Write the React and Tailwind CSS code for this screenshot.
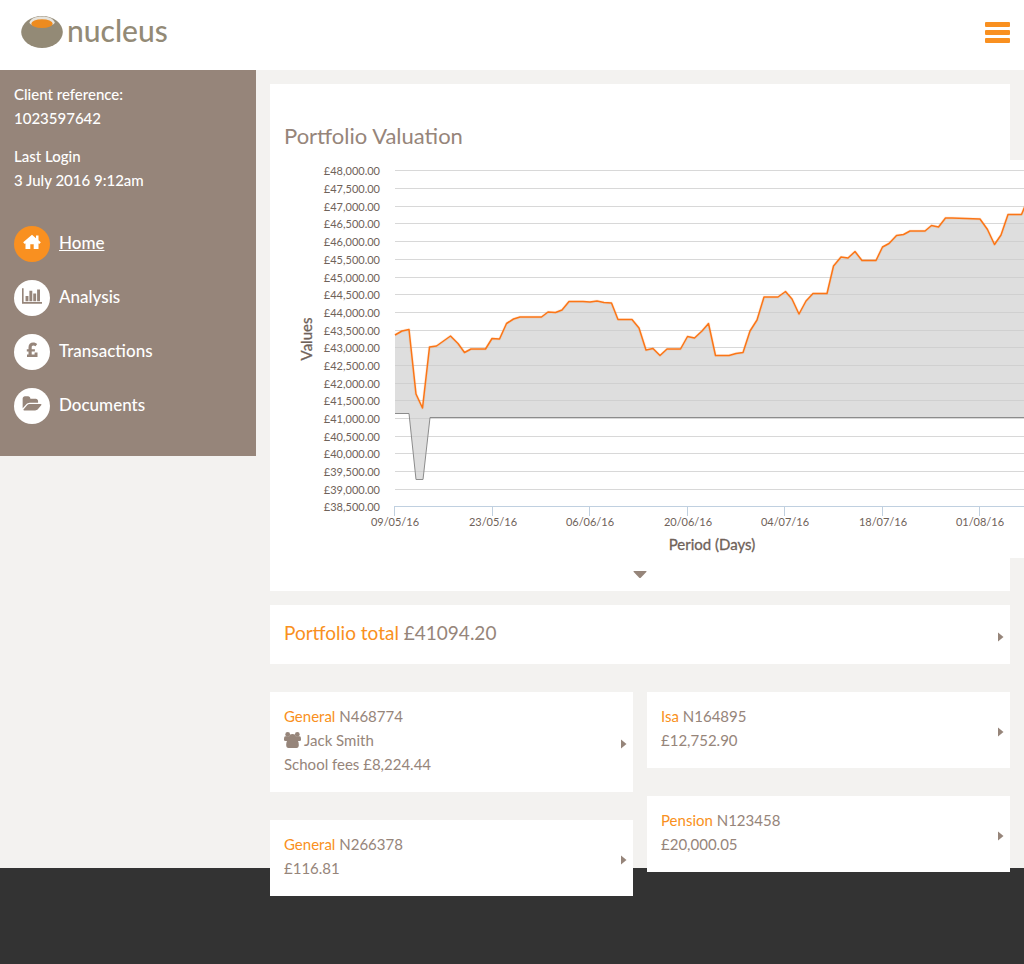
import { useId } from "react";

const VALUES = [
  [395, 335], [402, 331], [409, 329.5], [416, 394], [422.5, 408], [429.500, 347], [436.5, 346], [450.5, 336], [458, 343.500], [464.5, 352.5], [471, 349], [485.5, 349], [492, 338.5], [499.5, 339], [506.5, 323.5], [513.5, 319], [520, 317], [541.5, 317], [548, 312], [555.500, 312.5], [562, 310], [569, 301.5], [583, 301.5], [590, 302], [597, 301], [604, 302.5], [611.5, 303], [618, 319.5], [632, 319.5], [639, 328], [646, 350], [653, 348.5], [660, 355.5], [667, 349], [680.5, 349], [687.5, 336.5], [694.5, 338], [702, 331], [708.5, 323.5], [715.5, 355.5], [729, 355.5], [736, 353.5], [743, 352.5], [750, 331], [757, 320], [764, 297], [778, 297], [785.5, 291.5], [792, 299], [799, 314], [806, 301], [813, 293.5], [827, 293.5], [833.5, 266], [841, 257], [848, 258], [855, 251.5], [862, 260.5], [876, 260.5], [882.5, 247], [889, 243.5], [896.500, 235.5], [903.500, 234.5], [910, 231], [925, 231], [931.5, 225.5], [938.5, 227], [945.5, 218], [952, 218], [980, 219], [987.5, 229.5], [994.500, 244.500], [1001, 235], [1008, 214.500], [1021.500, 214.500], [1025, 206],
];
const BASE = [[395, 413.5], [409, 413.5], [416, 479.5], [423, 479.5], [430, 417.5], [1025, 417.5]];

const pts = (list) => list.map(([x, y]) => x + "," + y).join(" ");

const Y_TICKS = Array.from({ length: 20 }, (_, i) => ({
  label: "£" + (48000 - i * 500).toLocaleString("en-GB") + ".00",
  y: Math.round(170.4 + (i * 336) / 19),
}));
const X_TICKS = [
  ["09/05/16", 395], ["23/05/16", 493], ["06/06/16", 590], ["20/06/16", 688],
  ["04/07/16", 785], ["18/07/16", 883], ["01/08/16", 980],
];

function Chart() {
  const id = useId();
  return (
    <svg width="740" height="398" viewBox="284 160 740 398" role="img" aria-labelledby={id} className="block">
      <title id={id}>Portfolio Valuation</title>
      <rect x="284" y="160" width="740" height="398" fill="#fff" />
      {Y_TICKS.map((t) => (
        <g key={t.label}>
          <line x1="395" x2="1024" y1={t.y + 0.5} y2={t.y + 0.5} stroke="#d8d8d8" />
          <text x="380" y={t.y + 5} textAnchor="end" fontSize="11" fill="#6f6259">{t.label}</text>
        </g>
      ))}
      <polygon points={pts([...VALUES, ...[...BASE].reverse()])} fill="#cacaca" fillOpacity="0.63" />
      <polyline points={pts(BASE)} fill="none" stroke="#8c8c8c" />
      <polyline points={pts(VALUES)} fill="none" stroke="#ff7a1a" strokeOpacity="0.12" strokeWidth="3" strokeLinejoin="round" />
      <polyline points={pts(VALUES)} fill="none" stroke="#fb7516" strokeWidth="1.5" strokeLinejoin="round" />
      <line x1="394" x2="1024" y1="506.5" y2="506.5" stroke="#c0d0e0" />
      {X_TICKS.map(([label, x]) => (
        <g key={label}>
          <line x1={x - 0.5} x2={x - 0.5} y1="507" y2="516" stroke="#c0d0e0" />
          <text x={x} y="526" textAnchor="middle" fontSize="11" fill="#6f6259">{label}</text>
        </g>
      ))}
      <text x="712" y="550" textAnchor="middle" fontSize="15" fill="#6f6259" stroke="#6f6259" strokeWidth="0.3">Period (Days)</text>
      <text transform="translate(312 339) rotate(-90)" textAnchor="middle" fontSize="15" fill="#6f6259" stroke="#6f6259" strokeWidth="0.3">Values</text>
    </svg>
  );
}

const ICONS = {
  home: {
    viewBox: "0 0 18 18",
    d: "M9 1.800 13 5.200V2.500H15.500V7.300L17.800 9.300 16.700 10.700 15.500 10.400V16H10.700V11.300H7.300V16H2.500V10.400L1.300 10.700.2 9.300z",
  },
  bars: {
    viewBox: "0 0 2048 1792",
    d: "M640 896v512H352V896h288zm384-512v1024H736V384h288zm1024 1120v176H0V128h160v1376h1888zm-640-864v768h-288V640h288zm384-384v1152h-288V256h288z",
  },
  pound: {
    viewBox: "0 0 12 18",
    d: "M1 16V13.600H2.500V10.600H.8V8.200H2.500V6.200C2.500 3.400 4.400 1.600 7.100 1.600 8.900 1.600 10.300 2.300 11.200 3.100L9.500 5.300C8.800 4.700 8.100 4.400 7.300 4.400 6.200 4.400 5.700 5.100 5.700 6.300V8.200H8.900V10.600H5.700V13.400H8.600V11.500H11.500V16z",
  },
  folder: {
    viewBox: "0 0 1943 1792",
    d: "M1943 952q0 31-31 66l-336 396q-43 51-120.500 86.500t-143.500 35.500h-1088q-34 0-60.500-13t-26.500-43q0-31 31-66l336-396q43-51 120.500-86.500t143.500-35.500h1088q34 0 60.500 13t26.500 43zm-343-344v160h-832q-94 0-197 47.500t-164 119.500l-337 396-5 6q0-4-.5-12.500t-.5-12.500v-960q0-92 66-158t158-66h320q92 0 158 66t66 158v32h544q92 0 158 66t66 158z",
  },
};

function NavItem({ icon, label, active }) {
  const { viewBox, d } = ICONS[icon];
  return (
    <li>
      <a href="#" aria-current={active ? "page" : undefined} className="flex items-center gap-[9px] text-white">
        <span className={active ? "flex size-9 items-center justify-center rounded-full bg-[#f99020] text-white" : "flex size-9 items-center justify-center rounded-full bg-white text-[#96857a]"}>
          <svg viewBox={viewBox} className="mb-1 h-[18px] w-auto" fill="currentColor" aria-hidden="true"><path d={d} /></svg>
        </span>
        <span className={active ? "pb-0.5 text-[17px] font-medium underline" : "pb-0.5 text-[17px] font-medium"}>{label}</span>
      </a>
    </li>
  );
}

function Arrow() {
  return (
    <svg width="6" height="10" viewBox="0 0 6 10" fill="#96857a" className="mt-2 shrink-0" aria-hidden="true"><path d="M0 0.500 5.500 5 0 9.500z" /></svg>
  );
}

function Account({ kind, number, owner, amount }) {
  return (
    <a href="#" className="flex items-center justify-between bg-white pt-3 pr-1.5 pb-4 pl-3.5 text-[15px] leading-6">
      <span>
        <span className="block"><span className="text-[#f99020]">{kind}</span> {number}</span>
        {owner && (
          <span className="flex items-center gap-[3px]">
            <svg width="17" height="16" viewBox="0 0 17 16" fill="currentColor" aria-hidden="true">
              <circle cx="3.700" cy="2.400" r="2.400" />
              <circle cx="13.300" cy="2.400" r="2.400" />
              <path d="M0 6.500Q0 4.300 1.500 4.300H15.500Q17 4.300 17 6.500V8Q17 9 15.500 9H1.500Q0 9 0 8z" />
              <circle cx="8.500" cy="5.500" r="3.400" />
              <path d="M2.200 13Q2.200 8 5 8H12Q14.800 8 14.800 13 14.800 16 12.500 16H4.500Q2.200 16 2.200 13z" />
            </svg>
            {owner}
          </span>
        )}
        <span className="block">{amount}</span>
      </span>
      <Arrow />
    </a>
  );
}

export default function App() {
  return (
    <div className="flex min-h-screen flex-col overflow-x-hidden bg-[#f3f2f0] font-['Lato',sans-serif] text-[#96857a]">
      <header className="flex h-[70px] items-center justify-between bg-white pr-3.5 pb-1.5 pl-5">
        <a href="#" className="flex items-center gap-1 text-[#938a76]">
          <svg width="43" height="34" viewBox="0 0 43 34" aria-hidden="true">
            <ellipse cx="22" cy="17" rx="20.800" ry="16" fill="#938a76" />
            <path d="M9.500 7.500C10.500 3.500 15.500 1.500 22 1.500S33.500 3.500 34.700 7.500C34 10 29 11.500 22 11.500S10 10 9.500 7.500z" fill="#e6e3dc" />
            <ellipse cx="22" cy="8.700" rx="10.700" ry="4.400" fill="#ed8b1f" />
          </svg>
          <span className="pb-1 text-[30px] leading-8 font-medium">nucleus</span>
        </a>
        <button type="button" aria-label="Menu" className="flex flex-col gap-[3px]">
          <span className="h-[5px] w-[25px] rounded-[1px] bg-[#f99020]" />
          <span className="h-[5px] w-[25px] rounded-[1px] bg-[#f99020]" />
          <span className="h-[5px] w-[25px] rounded-[1px] bg-[#f99020]" />
        </button>
      </header>
      <div className="relative z-10 flex items-start">
        <aside className="w-1/4 bg-[#96857a] px-3.5 pt-3 pb-8 text-[15px] leading-6 font-medium text-white">
          <p className="mb-3.5">Client reference:<br />1023597642</p>
          <p>Last Login<br />3 July 2016 9:12am</p>
          <nav className="mt-[34px]">
            <ul className="flex flex-col gap-[18px]">
              <NavItem icon="home" label="Home" active />
              <NavItem icon="bars" label="Analysis" />
              <NavItem icon="pound" label="Transactions" />
              <NavItem icon="folder" label="Documents" />
            </ul>
          </nav>
        </aside>
        <main className="w-3/4 px-3.5 pt-3.5">
          <section className="bg-white px-3.5 pt-9 pb-3">
            <h1 className="text-[22px] leading-8">Portfolio Valuation</h1>
            <div className="mt-2"><Chart /></div>
            <button type="button" aria-label="Show details" className="mx-auto mt-3 block">
              <svg width="14" height="9" viewBox="0 0 14 9" fill="#96857a" className="block"><path d="M1 1H13Q14 1 13.300 2L8 7.500Q7 8.500 6 7.500L.7 2Q0 1 1 1z" /></svg>
            </button>
          </section>
          <a href="#" className="mt-3.5 flex items-center justify-between bg-white pt-3 pr-1.5 pb-4 pl-3.5">
            <span className="text-[19px] leading-[31px]"><span className="text-[#f99020]">Portfolio total</span> £41094.20</span>
            <Arrow />
          </a>
          <div className="mt-7 grid grid-cols-2 items-start gap-x-3.5">
            <div className="flex flex-col gap-7">
              <Account kind="General" number="N468774" owner="Jack Smith" amount="School fees £8,224.44" />
              <Account kind="General" number="N266378" amount="£116.81" />
            </div>
            <div className="flex flex-col gap-7">
              <Account kind="Isa" number="N164895" amount="£12,752.90" />
              <Account kind="Pension" number="N123458" amount="£20,000.05" />
            </div>
          </div>
        </main>
      </div>
      <footer className="-mt-7 min-h-24 flex-1 bg-[#333]" />
    </div>
  );
}
